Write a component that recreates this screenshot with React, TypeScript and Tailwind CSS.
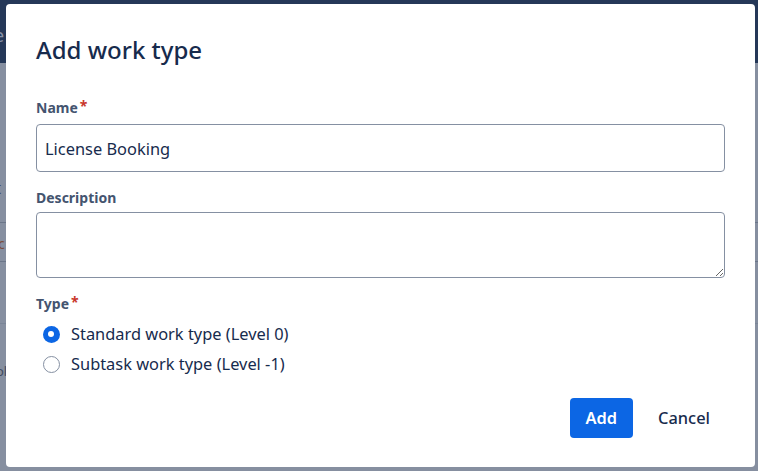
import React, { useState } from 'react';

const font = { fontFamily: '"Noto Sans", "Open Sans", sans-serif' };

const Radio = ({ checked, label, onClick }: { checked: boolean; label: string; onClick: () => void }) => (
  <label className="flex items-center h-[30px] cursor-pointer" onClick={onClick}>
    <span className="w-[30px] flex justify-center">
      {checked ? (
        <span className="w-[17px] h-[17px] rounded-full bg-[#0c66e4] flex items-center justify-center">
          <span className="w-[6px] h-[6px] rounded-full bg-white" />
        </span>
      ) : (
        <span className="w-[17px] h-[17px] rounded-full border border-[#8590a2] bg-white" />
      )}
    </span>
    <span className="ml-[5px] text-[16.4px] leading-[22px] text-[#172b4d]">{label}</span>
  </label>
);

const Label = ({ text, required }: { text: string; required?: boolean }) => (
  <div className="flex items-start text-[14px] font-bold text-[#44546f] leading-[20px]">
    {text}
    {required && <span className="ml-[2px] text-[#c9372c] text-[14px] leading-[16px]">*</span>}
  </div>
);

export default function App() {
  const [type, setType] = useState(0);

  return (
    <div className="relative w-[758px] h-[471px] overflow-hidden bg-[#868fa0]" style={font}>
      {/* dimmed page behind the modal */}
      <div className="h-[63px] bg-[#253858] pt-[22px] text-[18px] text-[#8993a8] -ml-[6px]">e</div>
      <div className="text-[#3f4a5e] text-[17px] -ml-[5px] mt-[112px]">t</div>
      <div className="border-t border-[#6b7689] mt-[21px] h-[39px] text-[#7a4a3a] text-[14px] pt-[10px] -ml-[2px]">c</div>
      <div className="border-t border-[#6b7689] h-[62px]" />
      <div className="border-t border-[#7a8597]" />
      <div className="text-[#3f4a5e] text-[13px] -ml-[4px] mt-[38px]">ol</div>

      {/* modal */}
      <div className="absolute left-[6px] top-[4px] w-[749px] h-[463px] bg-white rounded-[4px] px-[30px] pt-[31px]">
        <h1 className="text-[24px] leading-[30px] font-medium text-[#172b4d]">Add work type</h1>

        <div className="mt-[33px]">
          <Label text="Name" required />
          <input
            defaultValue="License Booking"
            className="mt-[6px] w-full h-[48px] border border-[#8590a2] rounded-[4px] px-[8px] text-[16.4px] text-[#172b4d] outline-none block"
            style={font}
          />
        </div>

        <div className="mt-[16px]">
          <Label text="Description" />
          <textarea
            className="mt-[4px] w-full h-[66px] border border-[#8590a2] rounded-[4px] px-[8px] py-[6px] text-[16.4px] outline-none block"
            style={font}
          />
        </div>

        <div className="mt-[16px]">
          <Label text="Type" required />
          <div className="mt-[5px]">
            <Radio checked={type === 0} label="Standard work type (Level 0)" onClick={() => setType(0)} />
            <Radio checked={type === 1} label="Subtask work type (Level -1)" onClick={() => setType(1)} />
          </div>
        </div>

        <div className="mt-[19px] flex justify-end gap-[10px]">
          <button className="h-[40px] px-[16px] rounded-[4px] bg-[#0c66e4] text-white text-[16.4px] font-semibold">Add</button>
          <button className="h-[40px] px-[15px] rounded-[4px] text-[#172b4d] text-[16.4px] font-medium">Cancel</button>
        </div>
      </div>
    </div>
  );
}
